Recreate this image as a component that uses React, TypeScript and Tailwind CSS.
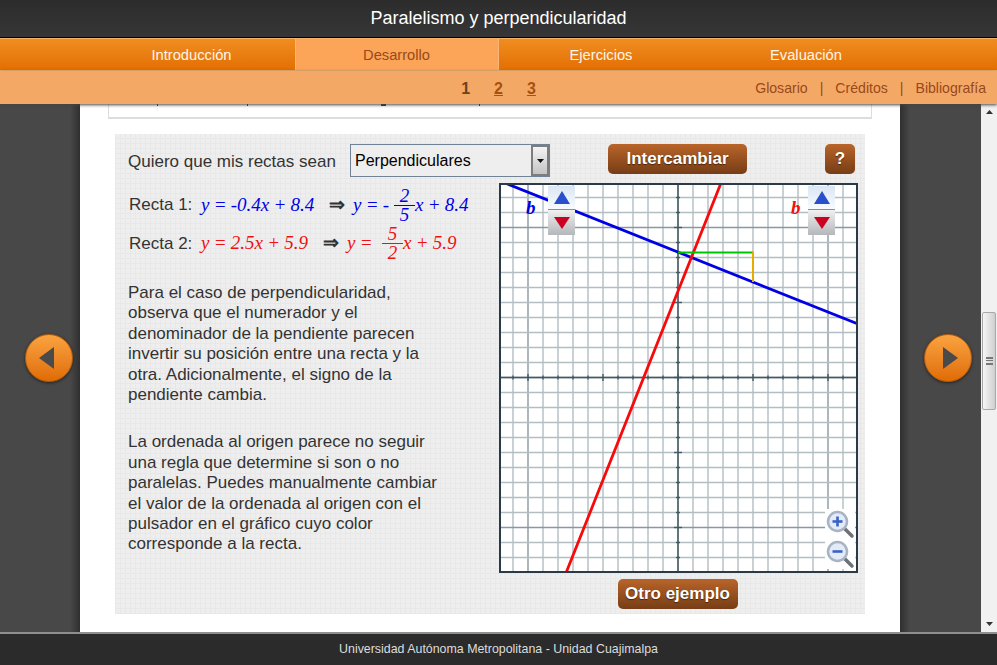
const verticals = Array.from({ length: 23 }, (_, i) => 14 + i * 15);
const horizontals = Array.from({ length: 26 }, (_, i) => i * 15);

const PanelButton = ({ label, className }: { label: string; className: string }) => (
  <button
    className={`h-[30px] rounded-[5px] bg-linear-to-b from-[#b9652a] to-[#773d16] text-[17px] font-bold text-white [text-shadow:0_1px_1px_#4a2408] ${className}`}
  >
    {label}
  </button>
);

const Fraction = ({ top, bottom }: { top: string; bottom: string }) => (
  <span className="inline-flex w-[21px] flex-col items-center leading-[18px]">
    <span>{top}</span>
    <span className="h-px w-full bg-current" />
    <span>{bottom}</span>
  </span>
);

const Spinner = ({ className }: { className: string }) => (
  <div className={`absolute top-[3px] flex h-[49px] w-[27px] flex-col ${className}`}>
    <div className="flex h-[24px] items-center justify-center border-b border-[#8a8f96] bg-linear-to-b from-[#dbe6f3] to-[#f7fbff]">
      <svg width="16" height="13" viewBox="0 0 16 13">
        <path d="M8 0 L16 13 L0 13 Z" fill="#2a4fcc" />
      </svg>
    </div>
    <div className="flex h-[25px] items-center justify-center bg-linear-to-b from-[#f0f0f0] to-[#b4b7bb]">
      <svg width="16" height="12" viewBox="0 0 16 12">
        <path d="M0 0 L16 0 L8 12 Z" fill="#cc0020" />
      </svg>
    </div>
  </div>
);

const Magnifier = ({ plus }: { plus?: boolean }) => (
  <svg width="30" height="30" viewBox="0 0 30 30" className="block bg-white">
    <line x1="19" y1="19" x2="27" y2="27" stroke="#6d7276" strokeWidth="3.5" strokeLinecap="round" />
    <circle cx="12.5" cy="12.5" r="9.5" fill="#e3ebf8" stroke="#a9b4c2" strokeWidth="2.5" />
    <line x1="7.5" y1="12.5" x2="17.5" y2="12.5" stroke="#3a62c4" strokeWidth="2.6" />
    {plus && <line x1="12.5" y1="7.5" x2="12.5" y2="17.5" stroke="#3a62c4" strokeWidth="2.6" />}
  </svg>
);

const Graph = () => (
  <div className="relative h-[390px] w-[359px]">
    <svg width="359" height="390" viewBox="0 0 359 390" className="block bg-white">
      {verticals.map((x) => (
        <line
          key={x}
          x1={x}
          y1="0"
          x2={x}
          y2="390"
          stroke={(x - 179) % 150 === 0 ? "#8b999f" : "#b3bec2"}
          strokeWidth="1.4"
        />
      ))}
      {horizontals.map((y) => (
        <line
          key={y}
          x1="0"
          y1={y - 0.5}
          x2="359"
          y2={y - 0.5}
          stroke={(y - 195) % 150 === 0 ? "#8b999f" : "#b3bec2"}
          strokeWidth="1.4"
        />
      ))}
      <line x1="179" y1="0" x2="179" y2="390" stroke="#425862" strokeWidth="1.4" />
      <line x1="0" y1="194.5" x2="359" y2="194.5" stroke="#425862" strokeWidth="1.4" />
      {horizontals.map((y) => (
        <line key={y} x1={y % 75 === 45 ? 175 : 177} y1={y - 0.5} x2={y % 75 === 45 ? 183 : 181} y2={y - 0.5} stroke="#425862" strokeWidth="1.4" />
      ))}
      {verticals.map((x) => (
        <line key={x} x1={x} y1={x % 75 === 29 ? 191 : 192.5} x2={x} y2={x % 75 === 29 ? 198 : 196.5} stroke="#425862" strokeWidth="1.4" />
      ))}
      <line x1="6" y1="0" x2="359" y2="141" stroke="#0000e6" strokeWidth="2.8" />
      <line x1="222" y1="0" x2="67" y2="390" stroke="#f80a0a" strokeWidth="2.8" />
      <line x1="179" y1="69.5" x2="254" y2="69.5" stroke="#00c400" strokeWidth="2" />
      <line x1="254" y1="69" x2="254" y2="99" stroke="#e8ac00" strokeWidth="2" />
      <rect x="1" y="1" width="357" height="388" fill="none" stroke="#2b3a48" strokeWidth="2" />
    </svg>
    <span className="absolute left-[27px] top-[14px] font-['Liberation_Serif',serif] text-[19px] font-bold italic leading-[22px] text-[#0000e6]">
      b
    </span>
    <span className="absolute left-[292px] top-[14px] font-['Liberation_Serif',serif] text-[19px] font-bold italic leading-[22px] text-[#f01010]">
      b
    </span>
    <Spinner className="left-[49px]" />
    <Spinner className="left-[309px]" />
    <div className="absolute left-[326px] top-[326px] flex flex-col">
      <Magnifier plus />
      <Magnifier />
    </div>
  </div>
);

const RoundArrow = ({ left }: { left?: boolean }) => (
  <div className="flex h-[48px] w-[48px] items-center justify-center rounded-full border border-[#b35a0c] bg-linear-to-b from-[#f9a33e] to-[#e06c00] shadow-[0_1px_3px_#222]">
    <svg width="16" height="22" viewBox="0 0 16 22" className={left ? "-ml-[4px]" : "ml-[5px]"}>
      <path d={left ? "M15 0 L15 22 L0 11 Z" : "M0 0 L0 22 L15 11 Z"} fill="#4a4a4a" />
    </svg>
  </div>
);

export default function App() {
  return (
    <div className="flex h-[665px] w-[997px] flex-col overflow-hidden font-['Liberation_Sans',Arial,sans-serif]">
      <header className="flex h-[38px] items-center justify-center border-b border-black bg-linear-to-b from-[#2c2c2c] to-[#363636] text-[18px] text-white">
        Paralelismo y perpendicularidad
      </header>

      <nav className="flex h-[33px] justify-center border-y border-[#f7b06a] bg-linear-to-b from-[#f08d1f] to-[#e36f00] pt-px text-[14.7px] text-[#fff5ea]">
        <a className="flex w-[206px] items-center justify-center">Introducción</a>
        <a className="-mt-px flex w-[204px] items-center justify-center border-x border-[#f9b678] bg-[#fca558] pt-px text-[#99491a]">
          Desarrollo
        </a>
        <a className="flex w-[205px] items-center justify-center">Ejercicios</a>
        <a className="flex w-[205px] items-center justify-center">Evaluación</a>
      </nav>

      <div className="relative z-10 grid h-[33px] grid-cols-[1fr_auto_1fr] items-center bg-[#f4a866] pt-[2px] shadow-[0_1px_3px_#444]">
        <span />
        <div className="flex gap-[24px] text-[16px] font-bold text-[#a8500f]">
          <span className="text-[#6d4220]">1</span>
          <a className="underline">2</a>
          <a className="underline">3</a>
        </div>
        <div className="flex justify-end gap-[12px] pr-[11px] text-[14.1px] text-[#99491a]">
          <a>Glosario</a>
          <span>|</span>
          <a>Créditos</a>
          <span>|</span>
          <a>Bibliografía</a>
        </div>
      </div>

      <main className="flex min-h-0 flex-1">
        <aside className="w-[80px] bg-linear-to-l from-[#2f2f2f] via-[#484848] via-[12%] to-[#484848] pl-[25px] pt-[230px]">
          <RoundArrow left />
        </aside>

        <section className="w-[820px] bg-white">
          <div className="mx-[28px] h-[15px] w-[764px] border-x border-b-2 border-[#dddddd]">
            <div className="flex h-[2px] gap-[89px] pl-[48px]">
              <span className="w-px bg-[#333]" />
              <span className="w-px bg-[#333]" />
              <span className="ml-[44px] w-[5px] bg-[#333]" />
              <span className="ml-[4px] w-px bg-[#333]" />
            </div>
          </div>

          <div className="mx-[35px] mt-[15px] h-[480px] w-[750px] bg-[#eeeeee] pl-[13px] pt-[10px] text-[#333333] [background-image:repeating-linear-gradient(0deg,#e8e8e8_0,#e8e8e8_1px,transparent_1px,transparent_5px),repeating-linear-gradient(90deg,#e8e8e8_0,#e8e8e8_1px,transparent_1px,transparent_5px)]">
            <div className="flex h-[33px]">
              <span className="mt-[8px] w-[222px] text-[17px] leading-[20px]">Quiero que mis rectas sean</span>
              <div className="flex h-[33px] w-[200px] border border-[#6f8296] bg-[#eeeeee] text-[16px] text-black">
                <span className="flex-1 pl-[4px] pt-[4px]">Perpendiculares</span>
                <div className="flex w-[18px] items-center justify-center border-2 border-[#7d7d7d] bg-linear-to-b from-[#f4f4f4] to-[#c4c4c4]">
                  <svg width="7" height="4" viewBox="0 0 7 4">
                    <path d="M0 0 L7 0 L3.5 4 Z" fill="#111" />
                  </svg>
                </div>
              </div>
              <PanelButton label="Intercambiar" className="ml-[58px] w-[139px]" />
              <PanelButton label="?" className="ml-[78px] w-[30px]" />
            </div>

            <div className="mt-[6px] flex">
              <div className="w-[371px]">
                <div className="flex h-[39px] items-center pt-[5px] text-[17px]">
                  <span className="ml-px w-[72px]">Recta 1:</span>
                  <div className="flex items-center font-['Liberation_Serif',serif] text-[19px] italic text-[#0000e6] [word-spacing:-0.5px]">
                    <span className="w-[128px]">y = -0.4x + 8.4</span>
                    <span className="w-[24px] font-['Liberation_Sans',sans-serif] font-bold not-italic text-[#333]">⇒</span>
                    <span className="w-[41px]">y = -</span>
                    <Fraction top="2" bottom="5" />
                    <span>x + 8.4</span>
                  </div>
                </div>
                <div className="flex h-[39px] items-center pt-[4px] text-[17px]">
                  <span className="ml-px w-[72px]">Recta 2:</span>
                  <div className="flex items-center font-['Liberation_Serif',serif] text-[19px] italic text-[#f01010] [word-spacing:-0.5px]">
                    <span className="w-[122px]">y = 2.5x + 5.9</span>
                    <span className="w-[24px] font-['Liberation_Sans',sans-serif] font-bold not-italic text-[#333]">⇒</span>
                    <span className="w-[35px]">y =</span>
                    <Fraction top="5" bottom="2" />
                    <span>x + 5.9</span>
                  </div>
                </div>

                <p className="mt-[22px] text-[17px] leading-[20.4px]">
                  Para el caso de perpendicularidad,
                  <br />
                  observa que el numerador y el
                  <br />
                  denominador de la pendiente parecen
                  <br />
                  invertir su posición entre una recta y la
                  <br />
                  otra. Adicionalmente, el signo de la
                  <br />
                  pendiente cambia.
                </p>
                <p className="mt-[27px] text-[17px] leading-[20.4px]">
                  La ordenada al origen parece no seguir
                  <br />
                  una regla que determine si son o no
                  <br />
                  paralelas. Puedes manualmente cambiar
                  <br />
                  el valor de la ordenada al origen con el
                  <br />
                  pulsador en el gráfico cuyo color
                  <br />
                  corresponde a la recta.
                </p>
              </div>

              <div className="flex w-[359px] flex-col items-center">
                <Graph />
                <PanelButton label="Otro ejemplo" className="mr-[2px] mt-[6px] w-[120px]" />
              </div>
            </div>
          </div>
        </section>

        <aside className="w-[81px] bg-linear-to-r from-[#2f2f2f] via-[#484848] via-[12%] to-[#484848] pl-[24px] pt-[230px]">
          <RoundArrow />
        </aside>

        <div className="flex w-[16px] flex-col bg-[#f1f1f1]">
          <div className="flex h-[16px] items-center justify-center">
            <svg width="7" height="4" viewBox="0 0 7 4">
              <path d="M3.5 0 L7 4 L0 4 Z" fill="#333" />
            </svg>
          </div>
          <div className="flex-1 pt-[192px]">
            <div className="ml-px flex h-[98px] w-[14px] items-center justify-center rounded-[2px] border border-[#a8a8a8] bg-linear-to-r from-[#f6f6f6] to-[#cfcfcf]">
              <div className="h-[8px] w-[7px] border-y-2 border-[#777] after:mt-px after:block after:h-px after:bg-[#777]" />
            </div>
          </div>
          <div className="flex h-[16px] items-center justify-center">
            <svg width="7" height="4" viewBox="0 0 7 4">
              <path d="M0 0 L7 0 L3.5 4 Z" fill="#333" />
            </svg>
          </div>
        </div>
      </main>

      <footer className="flex h-[33px] items-center justify-center border-t-2 border-[#8f8f8f] bg-[#2b2b2b] text-[12.4px] text-[#dddddd]">
        Universidad Autónoma Metropolitana - Unidad Cuajimalpa
      </footer>
    </div>
  );
}
